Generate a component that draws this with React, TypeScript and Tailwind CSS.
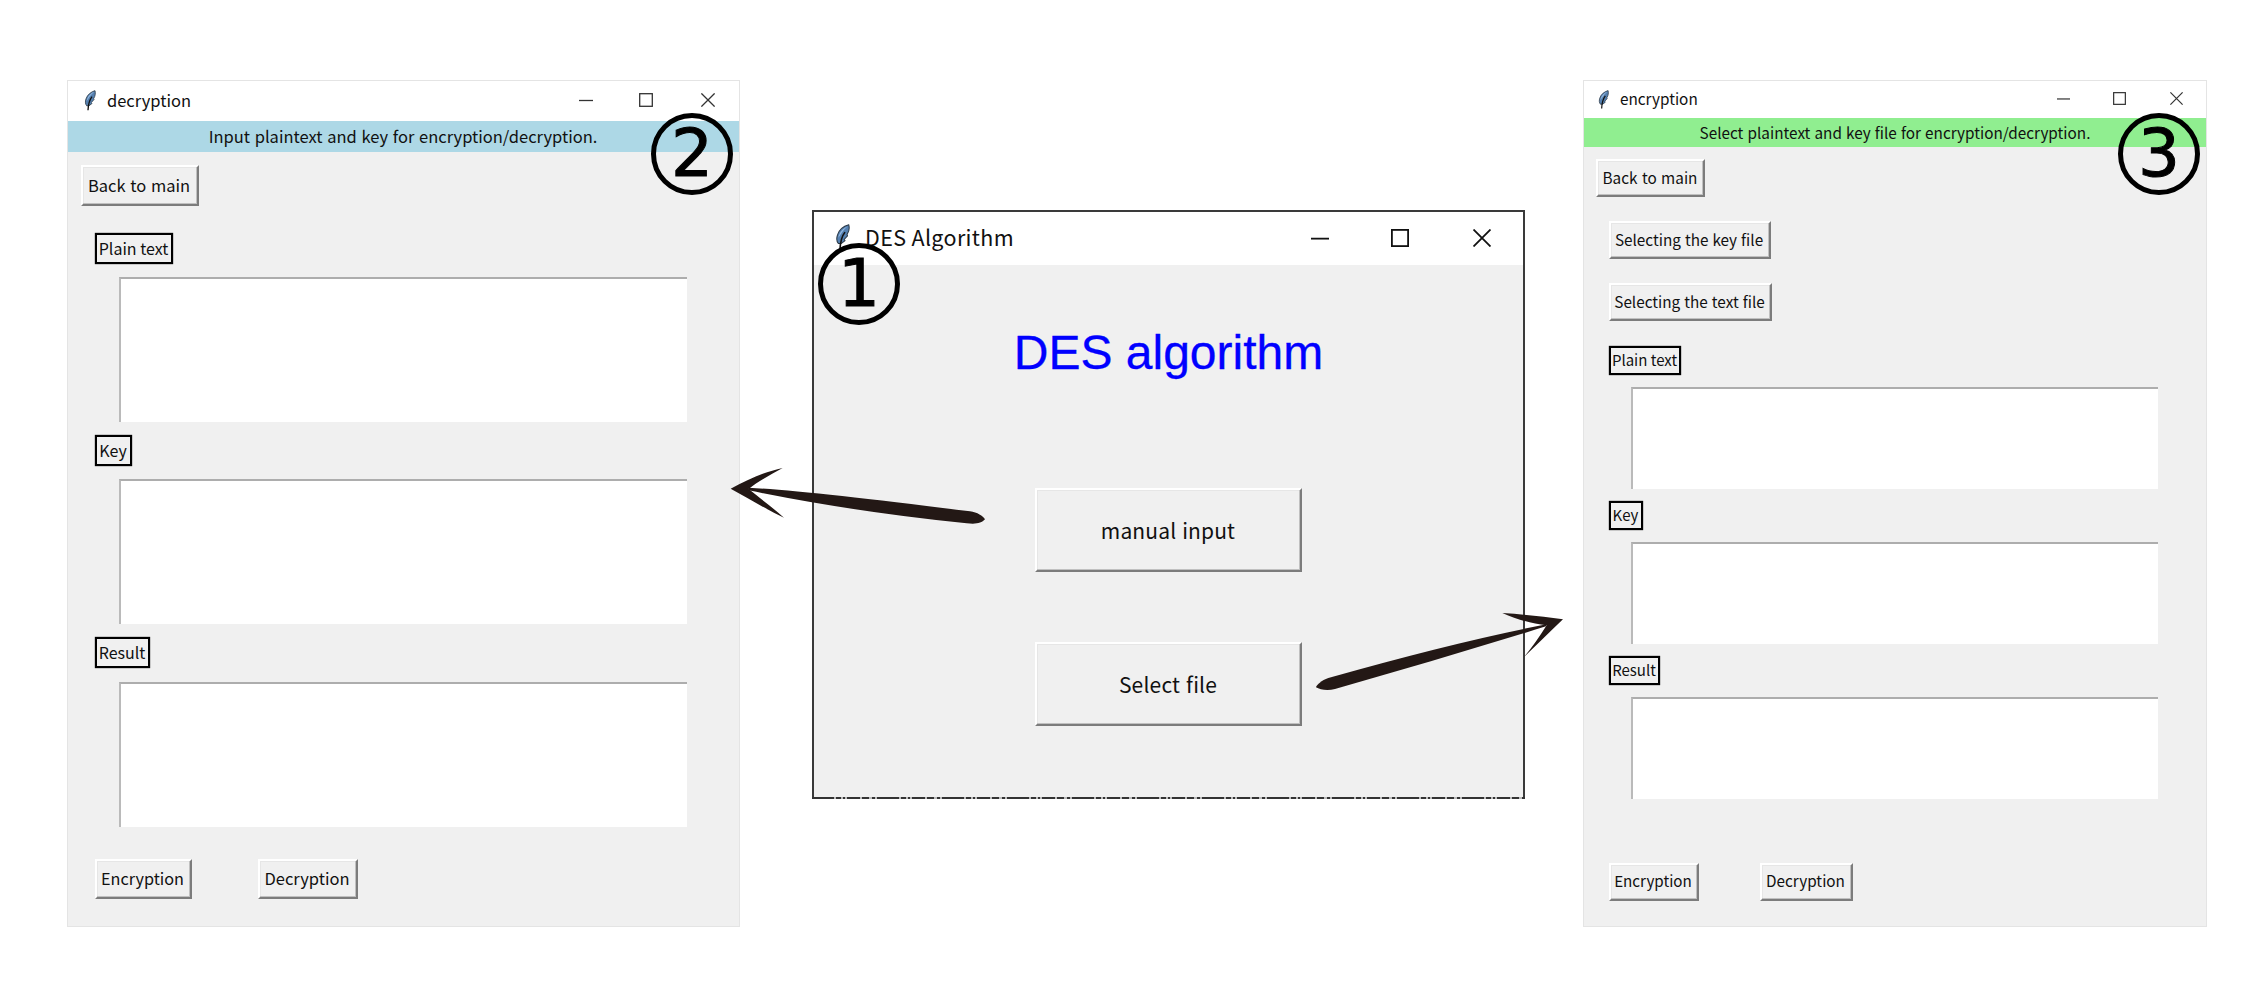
import type { ReactNode } from "react";

const UI = "font-['Noto_Sans_CJK_SC','Noto_Sans',sans-serif] whitespace-nowrap leading-none text-[#111]";

function Feather({ className }: { className: string }) {
  return (
    <svg className={className} viewBox="0 0 36 64" preserveAspectRatio="none">
      <path d="M33 2 C22 5 10 14 6 27 C3 36 4 43 8 48 L15 48 L24 41 L22 38 L30 29 L29 26 C34 18 35 9 33 2Z" fill="#5580b0" stroke="#2c3a48" strokeWidth="2.5" />
      <path d="M30 6 C20 10 10 20 8 34 C14 26 18 16 30 6Z" fill="#94b8e0" />
      <path d="M24 20 C17 29 13 40 12 62" fill="none" stroke="#111" strokeWidth="4" />
    </svg>
  );
}

function Controls({ size, gap, width, color }: { size: string; gap: string; width: number; color: string }) {
  return (
    <div className={`mb-[2px] flex ${gap}`}>
      <svg className={size} viewBox="0 0 14 14">
        <path d="M0 7.5H14" stroke={color} strokeWidth={width} />
      </svg>
      <svg className={`-ml-px mr-px ${size}`} viewBox="0 0 14 14">
        <rect x="0.7" y="0.7" width="12.6" height="12.6" fill="none" stroke={color} strokeWidth={width} />
      </svg>
      <svg className={size} viewBox="0 0 14 14">
        <path d="M0.4 0.4L13.6 13.6M13.6 0.4L0.4 13.6" stroke={color} strokeWidth={width} />
      </svg>
    </div>
  );
}

function Button({ className, children }: { className: string; children: ReactNode }) {
  return (
    <button
      className={`flex shrink-0 items-center justify-center border-2 border-t-white border-l-white border-r-[#7c7c7c] border-b-[#7c7c7c] bg-[#f0f0f0] shadow-[inset_-1px_-1px_0_#c0c0c0,inset_1px_1px_0_#e6e6e6] ${UI} ${className}`}
    >
      {children}
    </button>
  );
}

function Label({ className, children }: { className: string; children: ReactNode }) {
  return <div className={`flex shrink-0 items-center justify-center border-2 border-black pr-px pb-[2px] shadow-[0_0_1px_#000] ${UI} ${className}`}>{children}</div>;
}

function Area({ className }: { className: string }) {
  return <div className={`shrink-0 border-t-2 border-l-2 border-t-[#adadad] border-l-[#bababa] bg-white ${className}`} />;
}

function Circled({ className, children }: { className: string; children: ReactNode }) {
  return (
    <div
      className={`absolute flex h-[82px] w-[82px] items-center justify-center rounded-full border-[5px] border-black font-['DejaVu_Sans',sans-serif] text-[66px] leading-none text-black [-webkit-text-stroke:1px_black] ${className}`}
    >
      {children}
    </div>
  );
}

export default function App() {
  return (
    <main className="relative flex h-[1004px] w-[2257px] items-start overflow-hidden bg-white">
      <section className="relative mt-20 ml-[67px] h-[847px] w-[673px] border border-[#e4e4e4] bg-[#f0f0f0]">
        <header className="flex h-[40px] items-center bg-white pr-[24px] pl-[16px]">
          <Feather className="mb-[2px] h-[21px] w-3" />
          <span className={`mb-[2px] ml-[11px] flex-1 text-[16.5px] ${UI}`}>decryption</span>
          <Controls size="size-[14px]" gap="gap-[47px]" width={1.3} color="#333" />
        </header>
        <div className={`flex h-[31px] items-center justify-center bg-[#add8e6] text-[16.5px] [word-spacing:1px] ${UI}`}>
          <span className="-ml-px">Input plaintext and key for encryption/decryption.</span>
        </div>
        <Button className="mt-[13px] ml-[13px] h-[41px] w-[118px] pr-[2px] text-[16.5px] [word-spacing:1px]">Back to main</Button>
        <Label className="mt-[27px] ml-[27px] h-[31px] w-[78px] text-[16px]">Plain text</Label>
        <Area className="mt-[13px] ml-[51px] h-[145px] w-[568px]" />
        <Label className="mt-[13px] ml-[27px] h-[31px] w-[37px] text-[16px]">Key</Label>
        <Area className="mt-[13px] ml-[51px] h-[145px] w-[568px]" />
        <Label className="mt-[13px] ml-[27px] h-[31px] w-[55px] text-[16px]">Result</Label>
        <Area className="mt-[14px] ml-[51px] h-[145px] w-[568px]" />
        <div className="mt-[32px] ml-[27px] flex gap-[66px]">
          <Button className="h-[40px] w-[97px] pr-[2px] pb-[2px] text-[16.2px]">Encryption</Button>
          <Button className="h-[40px] w-[100px] pr-[2px] pb-[2px] text-[16.5px]">Decryption</Button>
        </div>
        <Circled className="top-[32px] left-[583px]">2</Circled>
      </section>

      <section className="relative mt-[210px] ml-[72px] h-[589px] w-[713px] border-2 border-[#3a3a3a] border-b-transparent bg-[#f0f0f0] bg-clip-padding">
        <header className="flex h-[53px] items-center bg-white pr-[32px] pl-[21px]">
          <Feather className="mb-[3px] h-[26px] w-[15px]" />
          <span className={`mb-[3px] ml-[15px] flex-1 text-[21.5px] tracking-[0.35px] ${UI}`}>DES Algorithm</span>
          <Controls size="size-[18px]" gap="gap-[63px]" width={1.4} color="#111" />
        </header>
        <h1 className="mt-[60px] text-center font-['Liberation_Sans',sans-serif] text-[48px] leading-[56px] whitespace-nowrap text-[#0000ff] [-webkit-text-stroke:0.3px_#0000ff]">DES algorithm</h1>
        <Button className="mt-[107px] ml-[221px] h-[84px] w-[267px] pr-px text-[21px] tracking-[0.15px] [word-spacing:1px]">manual input</Button>
        <Button className="mt-[70px] ml-[221px] h-[84px] w-[267px] pr-px text-[21px] tracking-[0.2px] [word-spacing:1px]">Select file</Button>
        <svg className="absolute -bottom-[2px] -left-[2px] h-[2px] w-[713px]" viewBox="0 0 713 2">
          <path d="M0 1H713" stroke="#bbb" strokeWidth="2" />
          <path d="M0 1H713" stroke="#333" strokeWidth="2" strokeDasharray="22 2 5 2 2 2 13 2 7 3 3 2" />
        </svg>
        <Circled className="top-[31px] left-[4px]">1</Circled>
      </section>

      <section className="relative mt-20 ml-[58px] h-[847px] w-[624px] border border-[#e4e4e4] bg-[#f0f0f0]">
        <header className="flex h-[37px] items-center bg-white pr-[23px] pl-[14px]">
          <Feather className="mb-px h-[19px] w-[11px]" />
          <span className={`mb-px ml-[11px] flex-1 text-[15.3px] ${UI}`}>encryption</span>
          <Controls size="size-[13px]" gap="gap-[43.5px]" width={1.3} color="#333" />
        </header>
        <div className={`flex h-[29px] items-center justify-center bg-[#90ee90] text-[15.3px] [word-spacing:0.7px] ${UI}`}>
          <span>Select plaintext and key file for encryption/decryption.</span>
        </div>
        <Button className="mt-[12px] ml-[12px] h-[38px] w-[109px] pr-px text-[15.3px] [word-spacing:1px]">Back to main</Button>
        <Button className="mt-[24px] ml-[25px] h-[38px] w-[162px] pr-[2px] text-[15.3px] [word-spacing:0.6px]">Selecting the key file</Button>
        <Button className="mt-[24px] ml-[25px] h-[38px] w-[163px] pr-[2px] text-[15.3px] [word-spacing:0.6px]">Selecting the text file</Button>
        <Label className="mt-[25px] ml-[25px] h-[29px] w-[72px] text-[15px]">Plain text</Label>
        <Area className="mt-[12px] ml-[47px] h-[102px] w-[527px]" />
        <Label className="mt-[12px] ml-[25px] h-[29px] w-[34px] text-[15px]">Key</Label>
        <Area className="mt-[12px] ml-[47px] h-[102px] w-[527px]" />
        <Label className="mt-[12px] ml-[25px] h-[29px] w-[51px] text-[15px]">Result</Label>
        <Area className="mt-[12px] ml-[47px] h-[102px] w-[527px]" />
        <div className="mt-[64px] ml-[25px] flex gap-[61px]">
          <Button className="h-[38px] w-[90px] pr-[2px] pb-[2px] text-[15.2px]">Encryption</Button>
          <Button className="h-[38px] w-[93px] pr-[2px] pb-[2px] text-[15.3px]">Decryption</Button>
        </div>
        <Circled className="top-[32px] left-[534px]">3</Circled>
      </section>

      <svg className="absolute top-[450px] left-[710px] h-[100px] w-[300px]" viewBox="0 0 900 300" fill="#231815">
        <path d="M62 116 C115 88 165 65 218 54 C182 74 145 94 116 117 C150 145 187 172 222 203 C165 176 115 145 62 116Z" />
        <path d="M116 113 Q300 123 780 184 C802 187 819 198 825 208 C814 220 799 223 770 220 Q420 184 116 121Z" />
      </svg>
      <svg className="absolute top-[590px] left-[1290px] h-[120px] w-[290px]" viewBox="0 0 870 360" fill="#231815">
        <path d="M637 69 C700 73 760 80 819 88 C780 125 740 165 700 203 C727 172 748 140 770 106 C725 101 680 88 637 69Z" />
        <path d="M770 103 Q500 155 115 264 C95 271 79 285 78 292 C90 300 115 302 135 297 Q450 208 768 109Z" />
      </svg>
    </main>
  );
}
